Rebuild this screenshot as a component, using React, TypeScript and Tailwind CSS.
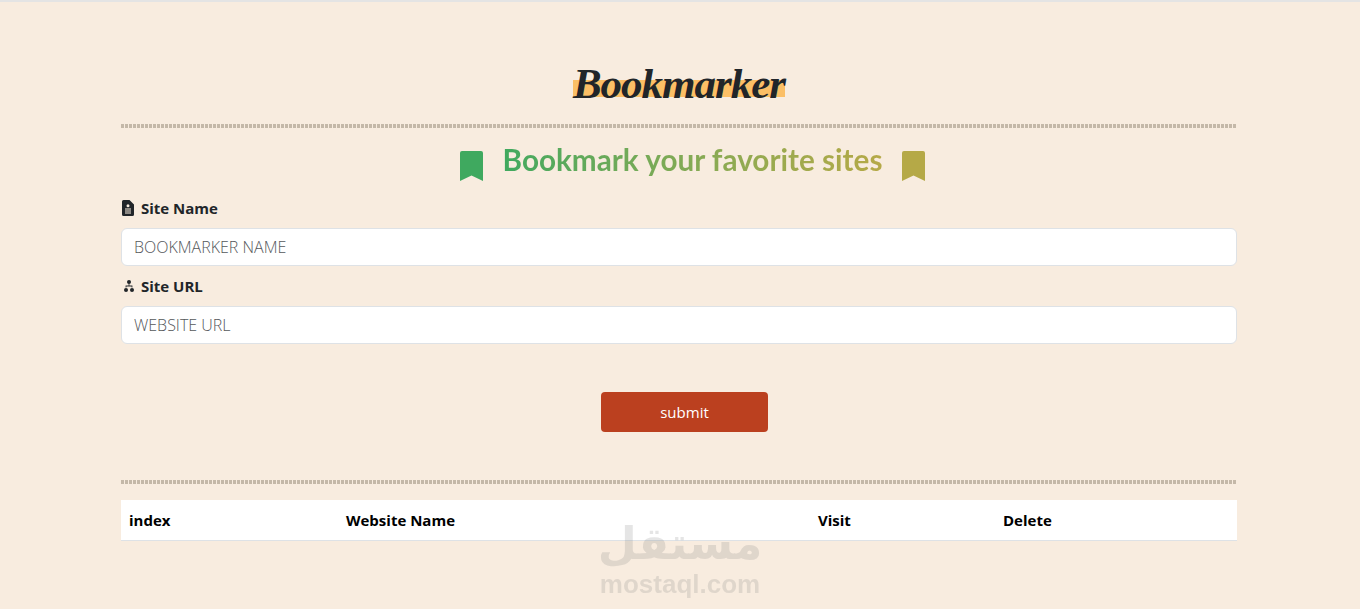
function BookmarkIcon({ className }: { className: string }) {
  return (
    <svg viewBox="0 0 23 30" className={`w-[23px] h-[30px] mt-[7px] ${className}`} fill="currentColor">
      <path d="M2 0H21A2 2 0 0 1 23 2V30L11.5 24.5 0 30V2A2 2 0 0 1 2 0Z" />
    </svg>
  );
}

function FileIcon() {
  return (
    <svg viewBox="0 0 12 16" className="w-[12px] h-[16px] ml-[1px] text-[#212529]" fill="currentColor">
      <path fillRule="evenodd" d="M1.5 0H7.5L12 4.5V14.5A1.5 1.5 0 0 1 10.5 16H1.5A1.5 1.5 0 0 1 0 14.5V1.5A1.5 1.5 0 0 1 1.5 0ZM6 4.2A1.5 1.5 0 1 0 6 7.2 1.5 1.5 0 1 0 6 4.2ZM3 8.6V9.6H9V8.6ZM3 10.6V11.6H9V10.6ZM3 12.6V13.5H9V12.6Z" />
    </svg>
  );
}

function NodesIcon() {
  return (
    <svg viewBox="0 0 10 12" className="w-[10px] h-[12px] ml-[3px] text-[#212529]" fill="currentColor">
      <circle cx="5" cy="2" r="2" />
      <path d="M4.6 3.5H5.4V5.6H8.4V7.5H7.6V6.4H2.4V7.5H1.6V5.6H4.6Z" />
      <circle cx="2" cy="10" r="2" />
      <circle cx="8" cy="10" r="2" />
    </svg>
  );
}

function Divider() {
  return <div className="h-[4px] bg-[repeating-linear-gradient(90deg,#c4b8a8_0px,#c4b8a8_3px,transparent_3px,transparent_4px)]" />;
}

export default function App() {
  return (
    <div
      className="relative h-[609px] overflow-hidden bg-[#f8ecdf] border-t-2 border-[#e4e4e4] text-[#212529]"
      style={{ fontFamily: '"Open Sans", sans-serif' }}
    >
      <div className="ml-[121px] w-[1116px] pt-[53px]">
        {/* Title */}
        <div className="flex justify-center h-[69px]">
          <h1 className="relative h-[58px] text-[43px] leading-[58px] font-bold italic tracking-[-1px]" style={{ fontFamily: '"Liberation Serif", serif' }}>
            <span className="absolute left-0 right-0 top-[25px] h-[17px] bg-[#fbbf66]" />
            <span className="relative">Bookmarker</span>
          </h1>
        </div>
        <Divider />

        {/* Heading */}
        <div className="flex items-center justify-center gap-[20px] h-[68px] pl-[27px]">
          <BookmarkIcon className="text-[#3fa95f]" />
          <h2
            className="text-[29.7px] leading-[34px] font-bold bg-gradient-to-r from-[#3fa95f] to-[#b5a947] bg-clip-text text-transparent mb-[4px]"
            style={{ fontFamily: '"Lato", sans-serif' }}
          >
            Bookmark your favorite sites
          </h2>
          <BookmarkIcon className="text-[#b5a947]" />
        </div>

        {/* Form */}
        <label className="flex items-center gap-[7px] h-[24px] text-[15px] font-bold">
          <FileIcon />
          Site Name
        </label>
        <input
          placeholder="BOOKMARKER NAME"
          className="block w-full h-[38px] mt-[8px] px-[12px] bg-white border border-[#dee2e6] rounded-[6px] text-[16px] font-light placeholder-[#55585b] outline-none"
        />
        <label className="flex items-center gap-[7px] h-[24px] mt-[8px] text-[15px] font-bold">
          <NodesIcon />
          Site URL
        </label>
        <input
          placeholder="WEBSITE URL"
          className="block w-full h-[38px] mt-[8px] px-[12px] bg-white border border-[#dee2e6] rounded-[6px] text-[16px] font-light placeholder-[#55585b] outline-none"
        />
        <div className="flex justify-center pl-[11px] mt-[48px]">
          <button className="w-[167px] h-[40px] rounded-[4px] bg-[#bb401f] text-white text-[15px]">submit</button>
        </div>

        <div className="mt-[48px]">
          <Divider />
        </div>

        {/* Table */}
        <table className="w-full mt-[16px] bg-white border-b border-[#dee2e6] text-black text-[15px] font-bold table-fixed">
          <thead>
            <tr className="h-[40px] text-left">
              <th className="w-[217px] pl-[8px]">index</th>
              <th className="w-[472px] pl-[8px]">Website Name</th>
              <th className="w-[185px] pl-[8px]">Visit</th>
              <th className="pl-[8px]">Delete</th>
            </tr>
          </thead>
        </table>
      </div>

      {/* Watermark */}
      <div className="absolute left-[600px] top-[514px] w-[160px] flex flex-col items-center text-[#808080] opacity-20 pointer-events-none">
        <span className="text-[45px] leading-[55px] font-bold" style={{ fontFamily: '"DejaVu Sans", sans-serif' }}>مستقل</span>
        <span className="text-[26px] leading-[26px] font-bold" style={{ fontFamily: '"Liberation Sans", sans-serif' }}>mostaql.com</span>
      </div>
    </div>
  );
}
